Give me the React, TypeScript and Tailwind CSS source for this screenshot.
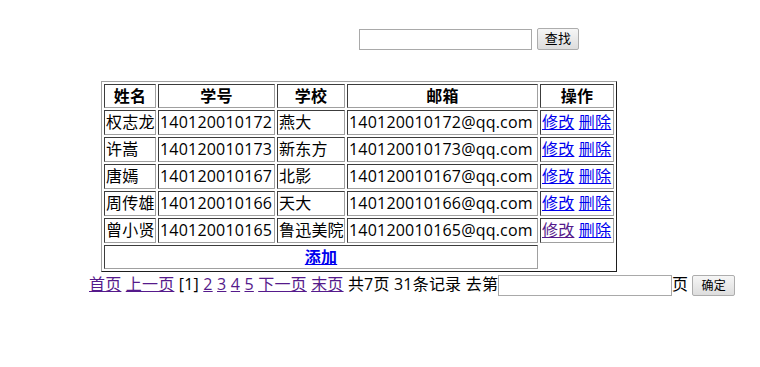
import React from 'react';

const ROWS = [
  { name: '权志龙', no: '140120010172', school: '燕大', mail: '140120010172@qq.com', visited: false },
  { name: '许嵩', no: '140120010173', school: '新东方', mail: '140120010173@qq.com', visited: false },
  { name: '唐嫣', no: '140120010167', school: '北影', mail: '140120010167@qq.com', visited: false },
  { name: '周传雄', no: '140120010166', school: '天大', mail: '140120010166@qq.com', visited: false },
  { name: '曾小贤', no: '140120010165', school: '鲁迅美院', mail: '140120010165@qq.com', visited: true },
];

const cell = 'border border-t-[#3c3c3c] border-l-[#3c3c3c] border-r-[#a0a0a0] border-b-[#a0a0a0] p-[1px] whitespace-nowrap overflow-hidden';
const link = 'underline text-[#0000ee]';
const visited = 'underline text-[#551a8b]';

function Button({ label, className }: { label: string; className: string }) {
  return (
    <button className={`inline-flex items-center justify-center align-middle rounded-[2px] border border-[#adadad] bg-gradient-to-b from-[#f6f6f6] to-[#dddddd] text-black ${className}`}>
      {label}
    </button>
  );
}

export default function App() {
  return (
    <div className="w-[760px] h-[367px] bg-white text-black text-[16px] tracking-[0.2px] font-['Open_Sans','Noto_Sans_CJK_SC',sans-serif] overflow-hidden">
      {/* search */}
      <div className="flex items-center pt-[28px] pl-[359px]">
        <input className="w-[173px] h-[21px] border border-[#a9a9a9] bg-white" />
        <Button label="查找" className="ml-[5px] w-[42px] h-[22px] text-[13px]" />
      </div>

      {/* list */}
      <table className="ml-[101px] mt-[31px] table-fixed w-[516px] border-separate border-spacing-[2px] border border-t-[#a0a0a0] border-l-[#a0a0a0] border-r-[#1e1e1e] border-b-[#1e1e1e] leading-[21px]">
        <thead>
          <tr>
            <th className={`${cell} w-[52px] leading-[20px] font-bold text-center`}>姓名</th>
            <th className={`${cell} w-[117px] leading-[20px] font-bold text-center`}>学号</th>
            <th className={`${cell} w-[68px] leading-[20px] font-bold text-center`}>学校</th>
            <th className={`${cell} w-[191px] leading-[20px] font-bold text-center`}>邮箱</th>
            <th className={`${cell} w-[74px] leading-[20px] font-bold text-center`}>操作</th>
          </tr>
        </thead>
        <tbody>
          {ROWS.map((r) => (
            <tr key={r.no}>
              <td className={cell}>{r.name}</td>
              <td className={cell}>{r.no}</td>
              <td className={cell}>{r.school}</td>
              <td className={cell}>{r.mail}</td>
              <td className={cell}>
                <span className={r.visited ? visited : link}>修改</span>{' '}
                <span className={link}>删除</span>
              </td>
            </tr>
          ))}
          <tr>
            <td colSpan={4} className={`${cell} leading-[20px] text-center font-bold`}>
              <span className={link}>添加</span>
            </td>
          </tr>
        </tbody>
      </table>

      {/* pager */}
      <div className="pl-[89px] h-[24px] leading-[24px] whitespace-nowrap">
        <span className={visited}>首页</span> <span className={visited}>上一页</span> [1]{' '}
        <span className={visited}>2</span> <span className={visited}>3</span>{' '}
        <span className={visited}>4</span> <span className={visited}>5</span>{' '}
        <span className={visited}>下一页</span> <span className={visited}>末页</span> 共7页 31条记录 去第
        <input className="inline-block align-middle w-[174px] h-[21px] border border-[#a9a9a9] bg-white" />
        页
        <Button label="确定" className="ml-[4px] w-[43px] h-[21px] text-[12px]" />
      </div>
    </div>
  );
}
